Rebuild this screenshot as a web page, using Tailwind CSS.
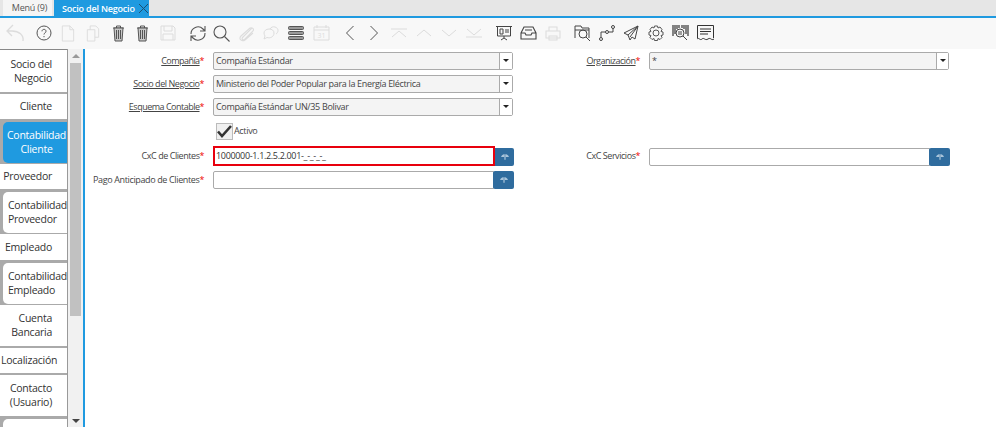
<!DOCTYPE html>
<html lang="es">
<head>
    <meta charset="UTF-8">
    <title>Socio del Negocio</title>
    <script src="https://cdn.jsdelivr.net/npm/@tailwindcss/browser@4"></script>
</head>
<body class="bg-white h-[427px] w-[996px] overflow-hidden font-['Open_Sans',sans-serif] text-[#333]">
    <!-- tabs -->
    <div class="h-[16px] bg-[#e6e6e6] flex items-end pl-[3px] text-[9px] leading-[15px] tracking-[-0.2px] whitespace-nowrap">
        <div class="w-[49px] h-[16px] shrink-0 bg-[#f5f5f5] text-center text-[#555] pl-[4px]">Menú (9)</div>
        <div class="ml-[2px] w-[95px] h-[16px] shrink-0 bg-[#1f9ae0] text-white font-semibold pl-[8px] flex items-center justify-between">
            <span>Socio del Negocio</span>
            <svg class="w-[11px] h-[11px]" viewBox="0 0 11 11" fill="none" stroke="#1c4f70" stroke-width="1"><path d="M1 1l9 9M10 1l-9 9"/></svg>
        </div>
    </div>
    <div class="h-[1.5px] bg-[#1f9ae0]"></div>

    <!-- toolbar -->
    <div class="h-[31px] bg-[#f8f8f8] flex items-center pl-[5px]">
        <svg class="w-[20px] h-[18px]" viewBox="0 0 20 18" fill="none" stroke="#dcdcdc" stroke-width="1.300"><path d="M18 17c1-6-4-10-11-10H3M8 1L2 7l5 5"/></svg>
        <svg class="w-[16px] h-[16px] ml-[11px]" viewBox="0 0 16 16" fill="none" stroke="#555" stroke-width="1"><circle cx="8" cy="8" r="7"/><path d="M6 6.300c0-2.600 4-2.600 4 0 0 1.600-2 1.500-2 3.200M8 11v1.200"/></svg>
        <svg class="w-[14px] h-[17px] ml-[9px]" viewBox="0 0 14 18" fill="none" stroke="#dcdcdc" stroke-width="1"><path d="M1 1h8l4 4v12H1zM9 1v4h4"/></svg>
        <svg class="w-[14px] h-[17px] ml-[11px]" viewBox="0 0 14 18" fill="none" stroke="#dcdcdc" stroke-width="1"><path d="M1 5h8v12H1zM4 5V1h6l3 3v9H9"/></svg>
        <svg class="w-[13px] h-[17px] ml-[12px]" viewBox="0 0 13 17" fill="#c8c8c8" stroke="#555" stroke-width="1"><path d="M1 3h11M4.500 3V1h4v2" fill="none"/><path d="M2 3l1 13h7l1-13zM4.500 5v9M6.500 5v9M8.500 5v9"/></svg>
        <svg class="w-[13px] h-[17px] ml-[11px]" viewBox="0 0 13 17" fill="#c8c8c8" stroke="#555" stroke-width="1"><path d="M1 3h11M4.500 3V1h4v2" fill="none"/><path d="M2 3l1 13h7l1-13zM4.500 5v9M6.500 5v9M8.500 5v9"/></svg>
        <svg class="w-[16px] h-[16px] ml-[11px]" viewBox="0 0 16 16" fill="none" stroke="#dcdcdc" stroke-width="1"><path d="M1 1h12l2 2v12H1zM4 1v5h8V1M3 15V9h10v6"/></svg>
        <svg class="w-[16px] h-[17px] ml-[14px]" viewBox="0 0 16 17" fill="none" stroke="#555" stroke-width="1.100"><path d="M1 9a7 7 0 0 1 12-5l2 2M15 8a7 7 0 0 1-12 5l-2-2M15 1v5h-5M1 16v-5h5"/></svg>
        <svg class="w-[17px] h-[17px] ml-[7px]" viewBox="0 0 17 17" fill="none" stroke="#555" stroke-width="1.100"><circle cx="7" cy="7" r="6"/><path d="M11.500 11.500l5 5"/></svg>
        <svg class="w-[17px] h-[17px] ml-[8px]" viewBox="0 0 17 17" fill="none" stroke="#dcdcdc" stroke-width="1.100"><path d="M14 3l-9 9c-2 2 0 4 2 2l8-8c1.500-2-1-4-3-3L3 11c-3 3 1 6 4 4l8-7"/></svg>
        <svg class="w-[16px] h-[14px] ml-[8px]" viewBox="0 0 16 14" fill="none" stroke="#dcdcdc" stroke-width="1"><path d="M6 3c-3 0-5 2-5 4 0 1 .5 2 1 3l-1 3 3-1.500c3 1 7-.5 7-4.500 0-2.500-2-4-5-4zM7 3c1-2 3-2.500 5-2 2 .5 3 2 3 3.500s-1 3-2 3.500"/></svg>
        <span class="ml-[9px] w-[16px] flex flex-col gap-[1px]">
            <span class="h-[4px] bg-[#999] border border-[#555] rounded-[1.500px]"></span>
            <span class="h-[4px] bg-[#999] border border-[#555] rounded-[1.500px]"></span>
            <span class="h-[4px] bg-[#999] border border-[#555] rounded-[1.500px]"></span>
        </span>
        <svg class="w-[17px] h-[16px] ml-[9px]" viewBox="0 0 17 16" fill="none" stroke="#dcdcdc" stroke-width="1"><path d="M1 2h15v13H1zM1 5h15M4 0v3M13 0v3"/><text x="8.500" y="13" text-anchor="middle" font-size="7" fill="#dcdcdc" stroke="none">31</text></svg>
        <svg class="w-[10px] h-[16px] ml-[15px]" viewBox="0 0 10 16" fill="none" stroke="#555" stroke-width="1"><path d="M8.500 1l-7 7 7 7"/></svg>
        <svg class="w-[10px] h-[16px] ml-[14px]" viewBox="0 0 10 16" fill="none" stroke="#555" stroke-width="1"><path d="M1.500 1l7 7-7 7"/></svg>
        <svg class="w-[16px] h-[10px] ml-[12px]" viewBox="0 0 16 10" fill="none" stroke="#dcdcdc" stroke-width="1"><path d="M0 1h16M1 9l7-6 7 6"/></svg>
        <svg class="w-[16px] h-[8px] ml-[9px]" viewBox="0 0 16 8" fill="none" stroke="#dcdcdc" stroke-width="1"><path d="M1 7l7-6 7 6"/></svg>
        <svg class="w-[16px] h-[8px] ml-[9px]" viewBox="0 0 16 8" fill="none" stroke="#dcdcdc" stroke-width="1"><path d="M1 1l7 6 7-6"/></svg>
        <svg class="w-[16px] h-[10px] ml-[9px]" viewBox="0 0 16 10" fill="none" stroke="#dcdcdc" stroke-width="1"><path d="M0 9h16M1 1l7 6 7-6"/></svg>
        <svg class="w-[16px] h-[16px] ml-[14px]" viewBox="0 0 16 16" fill="none" stroke="#444" stroke-width="1"><path d="M0 1.500h16M1.500 2v9h13V2M8 11v2M5 15l3-2 3 2M4 4h3v5H4zM9 5h4M9 7h4"/></svg>
        <svg class="w-[17px] h-[14px] ml-[8px]" viewBox="0 0 17 14" fill="none" stroke="#444" stroke-width="1.100"><path d="M1 7l3-6h9l3 6v6H1zM1 7h4l1 2h5l1-2h4M5 4h7"/></svg>
        <svg class="w-[16px] h-[15px] ml-[8px]" viewBox="0 0 16 15" fill="none" stroke="#dcdcdc" stroke-width="1.100"><path d="M4 5V1h8v4M1 5h14v7H1zM4 10h8v4H4z"/></svg>
        <svg class="w-[17px] h-[17px] ml-[13px]" viewBox="0 0 17 17" fill="none" stroke="#444" stroke-width="1"><path d="M1 13V1h6l1 2h7v10M1 5h14"/><circle cx="9" cy="9" r="4"/><path d="M12 12l4 4"/></svg>
        <svg class="w-[16px] h-[16px] ml-[8px]" viewBox="0 0 16 16" fill="none" stroke="#444" stroke-width="1"><circle cx="2" cy="14" r="1.500"/><circle cx="14" cy="2" r="1.500"/><circle cx="8" cy="7" r="1.500"/><path d="M2 12V7h4.500M9.500 7H14V3.500"/></svg>
        <svg class="w-[16px] h-[16px] ml-[8px]" viewBox="0 0 16 16" fill="none" stroke="#444" stroke-width="1"><path d="M15 1L1 8l4 2 2 5 2-3 3 2zM15 1L5 10M15 1L7 12"/></svg>
        <svg class="w-[16px] h-[16px] ml-[9px]" viewBox="0 0 16 16" fill="none" stroke="#555" stroke-width="1"><path d="M6.500 1h3l.5 2 2-1 2 2.500-1 2 2 .5v3l-2 .5 1 2-2 2-2-1-.5 2h-3l-.5-2-2 1-2-2 1-2-2-.5v-3l2-.5-1-2L4 2l2 1z"/><circle cx="8" cy="8" r="3"/></svg>
        <svg class="w-[17px] h-[16px] ml-[8px]" viewBox="0 0 17 16" fill="none" stroke="#444" stroke-width="1"><path d="M1 0v11M3 0v9M5 0v4M7 0v3M10 0v3M12 0v4M14 0v9M16 0v11" stroke-width="1.300"/><circle cx="8" cy="8" r="4"/><path d="M11 11l4 4M7 6v4M9 6v4"/></svg>
        <svg class="w-[17px] h-[16px] ml-[8px]" viewBox="0 0 17 16" fill="none" stroke="#333" stroke-width="1"><path d="M.5 13V.5h16V13M3 4h11M3 6.500h11M3 9h8" /><path d="M0 14c2-2 3 2 5 0s3 2 6 0 3 2 6 0" /></svg>
    </div>

    <div class="flex h-[379px]">
        <!-- sidebar tabs -->
        <div class="w-[68px] shrink-0 text-[10.500px] tracking-[-0.25px] leading-[14px] text-[#333] border-r-[1px] border-[#999] whitespace-nowrap">
            <div class="h-[1px] bg-[#888]"></div>
            <div class="h-[44px] flex items-center justify-end text-right pr-[15px] border-b-[2px] border-[#aaa]"><span>Socio del<br>Negocio</span></div>
            <div class="h-[27px] flex items-center justify-end pr-[15px] border-b-[2px] border-[#aaa]">Cliente</div>
            <div class="h-[43px] bg-[#aaa] pl-[3px] py-[1px]">
                <div class="h-[41px] bg-[#1f9ae0] rounded-l-[5px] text-white flex items-center justify-center text-center pl-[3px]"><span>Contabilidad<br>Cliente</span></div>
            </div>
            <div class="h-[27px] flex items-center justify-end pr-[15px] border-b-[2px] border-[#aaa]">Proveedor</div>
            <div class="h-[43px] bg-[#aaa] pl-[3px] py-[1px]">
                <div class="h-[41px] bg-white rounded-l-[5px] flex items-center pl-[5px]"><span>Contabilidad<br>Proveedor</span></div>
            </div>
            <div class="h-[28px] flex items-center justify-end pr-[15px] border-b-[2px] border-[#aaa]">Empleado</div>
            <div class="h-[43px] bg-[#aaa] pl-[3px] py-[1px]">
                <div class="h-[41px] bg-white rounded-l-[5px] flex items-center pl-[5px]"><span>Contabilidad<br>Empleado</span></div>
            </div>
            <div class="h-[43px] flex items-center justify-end text-right pr-[15px] border-b-[2px] border-[#aaa]"><span>Cuenta<br>Bancaria</span></div>
            <div class="h-[27px] flex items-center pl-[1px] border-b-[2px] border-[#aaa]">Localización</div>
            <div class="h-[43px] flex items-center justify-end text-center pr-[15px] border-b-[2px] border-[#aaa]"><span>Contacto<br>(Usuario)</span></div>
            <div class="h-[12px] bg-[#aaa] pl-[3px] pt-[1px]">
                <div class="h-[11px] bg-white rounded-tl-[5px]"></div>
            </div>
        </div>

        <!-- scrollbar -->
        <div class="w-[15px] shrink-0 bg-[#f1f1f1] flex flex-col items-center">
            <div class="h-[14px] flex items-center">
                <span class="border-x-[4px] border-x-transparent border-b-[4px] border-b-[#999]"></span>
            </div>
            <div class="w-[11px] h-[253px] bg-[#c1c1c1]"></div>
            <div class="mt-auto h-[14px] flex items-center">
                <span class="border-x-[4px] border-x-transparent border-t-[4px] border-t-[#444]"></span>
            </div>
        </div>
        <div class="w-[2px] shrink-0 bg-[#1f9ae0]"></div>

        <!-- form -->
        <div class="flex-1 pt-[3px] text-[9px] tracking-[-0.33px] text-[#444] whitespace-nowrap">
            <div class="flex h-[18px] items-center">
                <label class="w-[119px] text-right tracking-[-0.55px]"><span class="underline">Compañía</span><span class="text-[#e00]">*</span></label>
                <div class="ml-[9px] w-[300px] h-[18px] flex border border-[#aaa] rounded-[2px] bg-[#f4f4f4]">
                    <span class="flex-1 pl-[2px] leading-[15px]">Compañía Estándar</span>
                    <span class="w-[13px] bg-white border-l border-[#aaa] flex items-center justify-center"><i class="border-x-[3px] border-x-transparent border-t-[3px] border-t-[#222]"></i></span>
                </div>
                <label class="w-[127px] text-right tracking-[-0.5px]"><span class="underline">Organización</span><span class="text-[#e00]">*</span></label>
                <div class="ml-[9px] w-[300px] h-[18px] flex border border-[#aaa] rounded-[2px] bg-[#f4f4f4]">
                    <span class="flex-1 pl-[2px] leading-[15px]">*</span>
                    <span class="w-[12px] bg-white border-l border-[#aaa] flex items-center justify-center"><i class="border-x-[3px] border-x-transparent border-t-[3px] border-t-[#222]"></i></span>
                </div>
            </div>
            <div class="flex h-[18px] items-center mt-[5px]">
                <label class="w-[119px] text-right tracking-[-0.45px]"><span class="underline">Socio del Negocio</span><span class="text-[#e00]">*</span></label>
                <div class="ml-[9px] w-[300px] h-[18px] flex border border-[#aaa] rounded-[2px] bg-[#f4f4f4]">
                    <span class="flex-1 pl-[2px] leading-[15px]">Ministerio del Poder Popular para la Energía Eléctrica</span>
                    <span class="w-[13px] bg-white border-l border-[#aaa] flex items-center justify-center"><i class="border-x-[3px] border-x-transparent border-t-[3px] border-t-[#222]"></i></span>
                </div>
            </div>
            <div class="flex h-[18px] items-center mt-[5px]">
                <label class="w-[119px] text-right tracking-[-0.5px]"><span class="underline">Esquema Contable</span><span class="text-[#e00]">*</span></label>
                <div class="ml-[9px] w-[300px] h-[18px] flex border border-[#aaa] rounded-[2px] bg-[#f4f4f4]">
                    <span class="flex-1 pl-[2px] leading-[15px]">Compañía Estándar UN/35 Bolivar</span>
                    <span class="w-[13px] bg-white border-l border-[#aaa] flex items-center justify-center"><i class="border-x-[3px] border-x-transparent border-t-[3px] border-t-[#222]"></i></span>
                </div>
            </div>
            <div class="flex h-[17px] items-center mt-[7px] pl-[131px]">
                <span class="w-[17px] h-[17px] border border-[#bbb] bg-[#f0f0f0] flex items-center justify-center">
                    <svg class="w-[15px] h-[13px]" viewBox="0 0 15 13" fill="none" stroke="#333" stroke-width="2.600"><path d="M1 6.500l4 4.500 9-10"/></svg>
                </span>
                <span class="ml-[1px]">Activo</span>
            </div>
            <div class="flex h-[20px] items-center mt-[6px]">
                <label class="w-[119px] text-right tracking-[-0.45px]">CxC de Clientes<span class="text-[#e00]">*</span></label>
                <div class="ml-[9px] w-[282px] h-[20px] border-2 border-[#e8000d] pl-[1px] leading-[15px] text-[#333]">1000000-1.1.2.5.2.001-_-_-_-_</div>
                <button class="w-[19px] h-[18px] mt-[2px] bg-[#2f6c9e] rounded-r-[2px] flex items-center justify-center">
                    <svg class="w-[8px] h-[6px]" viewBox="0 0 9 6" fill="#a9c4da"><path d="M0 3C1 .5 3 0 4.200 0v6H3.500V3zM9 3C8 .5 6 0 4.800 0v6h.7V3z"/></svg>
                </button>
                <label class="w-[127px] text-right -ml-[1px] tracking-[-0.45px]">CxC Servicios<span class="text-[#e00]">*</span></label>
                <div class="ml-[9px] w-[281px] h-[18px] mt-[2px] border border-[#aaa] rounded-l-[2px]"></div>
                <button class="w-[21px] h-[18px] mt-[2px] -ml-[1px] bg-[#2f6c9e] rounded-[2px] flex items-center justify-center">
                    <svg class="w-[8px] h-[6px]" viewBox="0 0 9 6" fill="#a9c4da"><path d="M0 3C1 .5 3 0 4.200 0v6H3.500V3zM9 3C8 .5 6 0 4.800 0v6h.7V3z"/></svg>
                </button>
            </div>
            <div class="flex h-[18px] items-center mt-[5px]">
                <label class="w-[119px] text-right tracking-[-0.37px]">Pago Anticipado de Clientes<span class="text-[#e00]">*</span></label>
                <div class="ml-[9px] w-[281px] h-[18px] border border-[#aaa] rounded-l-[2px]"></div>
                <button class="w-[21px] h-[18px] -ml-[1px] bg-[#2f6c9e] rounded-[2px] flex items-center justify-center">
                    <svg class="w-[8px] h-[6px]" viewBox="0 0 9 6" fill="#a9c4da"><path d="M0 3C1 .5 3 0 4.200 0v6H3.500V3zM9 3C8 .5 6 0 4.800 0v6h.7V3z"/></svg>
                </button>
            </div>
        </div>
    </div>
</body>
</html>
